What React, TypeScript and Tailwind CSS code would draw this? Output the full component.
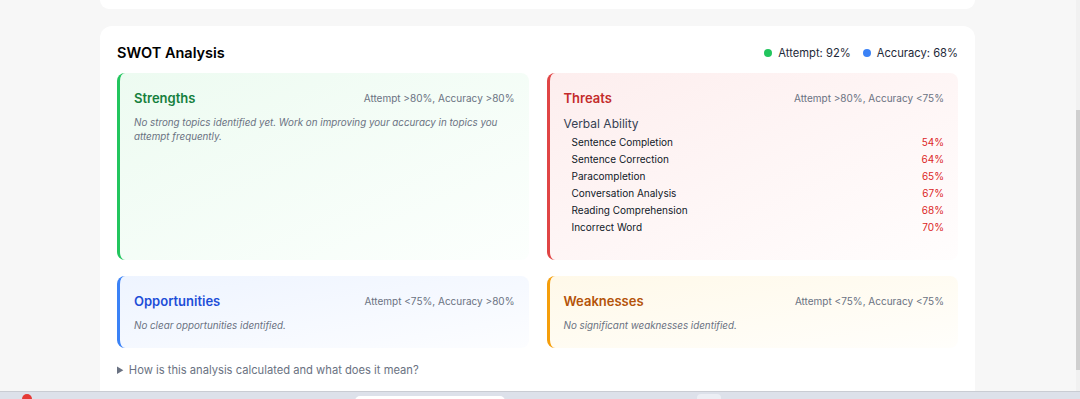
import React from "react"

const threats = [
  { name: "Sentence Completion", value: "54%" },
  { name: "Sentence Correction", value: "64%" },
  { name: "Paracompletion", value: "65%" },
  { name: "Conversation Analysis", value: "67%" },
  { name: "Reading Comprehension", value: "68%" },
  { name: "Incorrect Word", value: "70%" },
]

function Quadrant({
  title,
  criteria,
  className,
  titleClass,
  children,
}: {
  title: string
  criteria: string
  className: string
  titleClass: string
  children: React.ReactNode
}) {
  return (
    <div className={`rounded-lg border-l-[3px] pl-[14px] pr-[14px] pt-4 ${className}`}>
      <div className="flex items-center justify-between">
        <h3 className={`text-[13px] font-semibold leading-[18px] ${titleClass}`}>{title}</h3>
        <span className="text-[10px] leading-[18px] text-gray-500">{criteria}</span>
      </div>
      {children}
    </div>
  )
}

export default function App() {
  return (
    <div className="flex h-screen flex-col overflow-hidden bg-[#f7f7f7] font-['Inter','Liberation_Sans',sans-serif]">
      <div className="relative flex-1 overflow-hidden">
        <div className="ml-[100px] w-[875px]">
          {/* previous card, bottom edge */}
          <div className="h-[9px] rounded-b-xl bg-white" />

          {/* SWOT card */}
          <section className="mt-[17px] rounded-t-xl bg-white px-[17px] pb-4 pt-[17px]">
            <div className="flex items-center justify-between">
              <h2 className="text-[14.5px] font-semibold leading-5 text-black">SWOT Analysis</h2>
              <div className="flex items-center gap-3 text-[11.2px] text-gray-800">
                <span className="flex items-center gap-[6px]">
                  <span className="h-2 w-2 rounded-full bg-[#22c55e]" />
                  Attempt: 92%
                </span>
                <span className="flex items-center gap-[6px]">
                  <span className="h-2 w-2 rounded-full bg-[#3b82f6]" />
                  Accuracy: 68%
                </span>
              </div>
            </div>

            <div className="mt-[10px] grid grid-cols-2 gap-x-[18px] gap-y-4">
              <Quadrant
                title="Strengths"
                criteria="Attempt >80%, Accuracy >80%"
                className="border-[#22c55e] bg-linear-to-br from-[#edfbf1] to-[#fcfffd]"
                titleClass="text-[#15803d]"
              >
                <p className="mt-[9px] text-[9.8px] italic leading-[14px] text-gray-500">
                  No strong topics identified yet. Work on improving your accuracy in topics you attempt frequently.
                </p>
              </Quadrant>

              <Quadrant
                title="Threats"
                criteria="Attempt >80%, Accuracy <75%"
                className="border-[#e04545] bg-linear-to-br from-[#fdeeee] to-[#fffdfd] pb-6"
                titleClass="text-[#c42b2b]"
              >
                <div className="mt-[10px] text-[12px] leading-[14px] text-gray-700">Verbal Ability</div>
                <ul className="mt-[2.5px]">
                  {threats.map((t) => (
                    <li key={t.name} className="flex justify-between pl-2 text-[10px] leading-[17px]">
                      <span className="text-gray-900">{t.name}</span>
                      <span className="text-[#dc2626]">{t.value}</span>
                    </li>
                  ))}
                </ul>
              </Quadrant>

              <Quadrant
                title="Opportunities"
                criteria="Attempt <75%, Accuracy >80%"
                className="border-[#3b82f6] bg-linear-to-br from-[#eef4ff] to-[#fcfdff] pb-[15px]"
                titleClass="text-[#1d4ed8]"
              >
                <p className="mt-[9px] text-[9.8px] italic leading-[14px] text-gray-500">
                  No clear opportunities identified.
                </p>
              </Quadrant>

              <Quadrant
                title="Weaknesses"
                criteria="Attempt <75%, Accuracy <75%"
                className="border-[#f59e0b] bg-linear-to-br from-[#fff9e9] to-[#fffefb] pb-[15px]"
                titleClass="text-[#b45309]"
              >
                <p className="mt-[9px] text-[9.8px] italic leading-[14px] text-gray-500">
                  No significant weaknesses identified.
                </p>
              </Quadrant>
            </div>

            <details className="mt-[14px] text-[11.2px] text-gray-500">
              <summary className="cursor-pointer leading-4">How is this analysis calculated and what does it mean?</summary>
            </details>
          </section>
        </div>

        {/* scrollbar */}
        <div className="absolute right-0 top-0 h-full w-[4px] bg-[#f1f1f1]">
          <div className="mt-[110px] h-[260px] w-full bg-[#cfcfcf]" />
        </div>
      </div>

      {/* taskbar strip */}
      <div className="relative h-[8px] border-t border-[#c9ccd3] bg-[#dde1ea]">
        <span className="absolute left-[22px] top-[2px] h-[10px] w-[10px] rounded-full bg-[#e53935]" />
        <span className="absolute left-[355px] top-[4px] h-[10px] w-[150px] rounded-md bg-white" />
        <span className="absolute left-[697px] top-[2px] h-[10px] w-[24px] rounded-sm bg-[#eceef4]" />
      </div>
    </div>
  )
}
